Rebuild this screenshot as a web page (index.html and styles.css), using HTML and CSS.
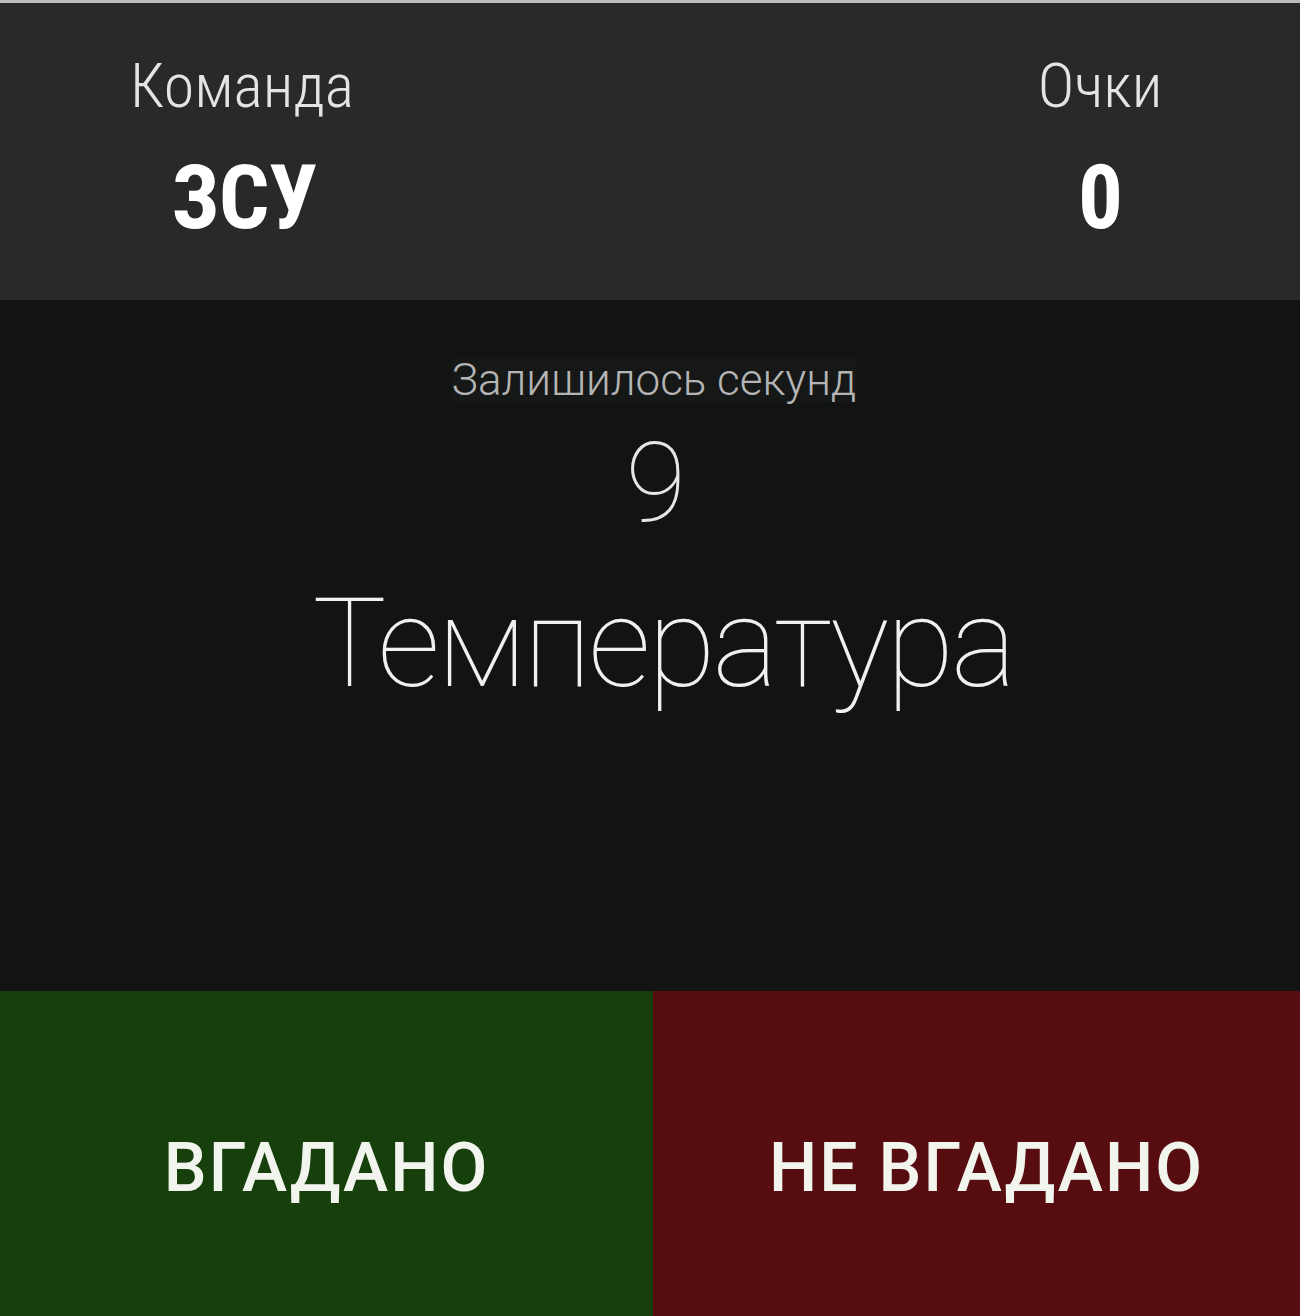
FILE: index.html
```html
<!DOCTYPE html>
<html lang="uk">
<head>
<meta charset="utf-8">
<title>Гра</title>
<link rel="stylesheet" href="styles.css">
</head>
<body>
<div class="app">
  <header class="scoreboard">
    <div class="col col-team">
      <div class="label">Команда</div>
      <div class="value">ЗСУ</div>
    </div>
    <div class="col col-score">
      <div class="label">Очки</div>
      <div class="value">0</div>
    </div>
  </header>
  <main class="stage">
    <div class="timer-label">Залишилось секунд</div>
    <div class="timer">9</div>
    <div class="word">Температура</div>
  </main>
  <footer class="actions">
    <button class="btn btn-yes">ВГАДАНО</button>
    <button class="btn btn-no">НЕ ВГАДАНО</button>
  </footer>
</div>
</body>
</html>
```
FILE: styles.css
```css
* { box-sizing: border-box; }
html, body { margin: 0; padding: 0; }
body {
  background: #121413;
  font-family: Roboto, "Noto Sans", sans-serif;
}
.app {
  width: 1300px;
  height: 1316px;
  display: flex;
  flex-direction: column;
}
.scoreboard {
  height: 300px;
  flex: none;
  background: #282a28;
  border-top: 3px solid #bcbdbc;
  display: flex;
  justify-content: space-between;
  padding: 52px 50px 0 92px;
}
.col {
  width: 300px;
  text-align: center;
  font-family: "Roboto Condensed", "Liberation Sans Narrow", "DejaVu Sans Condensed", Roboto, sans-serif;
}
.label {
  font-size: 62px;
  line-height: 62px;
  color: #e4e4e4;
  font-weight: 300;
}
.value {
  margin-top: 36px;
  font-size: 89px;
  line-height: 89px;
  font-weight: 700;
  color: #ffffff;
  letter-spacing: -1px;
}
.col-team .value { padding-left: 4px; }
.stage {
  flex: 1;
  display: flex;
  flex-direction: column;
  align-items: center;
  padding-top: 58px;
  padding-left: 8px;
}
.timer-label {
  font-size: 44px;
  line-height: 44px;
  font-weight: 300;
  color: #b4b4b4;
  background: #161817;
}
.timer {
  margin-top: 26px;
  font-size: 111px;
  line-height: 111px;
  font-weight: 100;
  color: #e6e6e6;
  padding-left: 4px;
}
.word {
  margin-top: 43px;
  font-size: 124px;
  line-height: 124px;
  font-weight: 100;
  color: #f0f0f0;
  letter-spacing: -3px;
  padding-left: 18px;
}
.actions {
  height: 325px;
  flex: none;
  display: flex;
}
.btn {
  border: 0;
  margin: 0;
  padding: 28px 0 0 0;
  height: 100%;
  display: flex;
  align-items: center;
  justify-content: center;
  font-family: Roboto, sans-serif;
  font-weight: 500;
  font-size: 68px;
  letter-spacing: 2px;
  color: #f2f5ee;
  cursor: pointer;
}
.btn-yes {
  width: 653px;
  background: #173f0c;
}
.btn-no {
  width: 647px;
  background: #570c10;
  padding-left: 20px;
}
```
